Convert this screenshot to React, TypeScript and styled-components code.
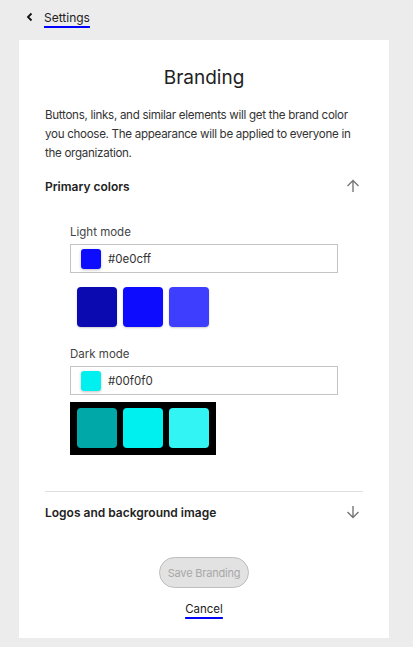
import styled, { createGlobalStyle } from "styled-components";

const GlobalStyle = createGlobalStyle`
  html, body {
    margin: 0;
    padding: 0;
    background: #ececec;
    font-family: Inter, "Noto Sans", sans-serif;
    color: #222;
  }
`;

const Page = styled.div`
  width: 413px;
  min-height: 647px;
  display: flex;
  flex-direction: column;
  padding: 0 24px 11px 19px;
  box-sizing: border-box;
`;

const TopBar = styled.div`
  height: 40px;
  display: flex;
  align-items: center;
  gap: 9px;
  padding-left: 6px;
  margin-top: -3px;
  margin-bottom: 3px;
`;

const BackLink = styled.a`
  font-size: 12px;
  color: #222;
  text-decoration: underline;
  text-decoration-color: #0000ff;
  text-decoration-thickness: 2px;
  text-underline-offset: 4px;
`;

const Card = styled.div`
  background: #fff;
  width: 370px;
  box-sizing: border-box;
  padding: 26px 26px 22px 26px;
  display: flex;
  flex-direction: column;
`;

const Title = styled.h1`
  margin: 0;
  font-size: 19px;
  font-weight: 400;
  text-align: center;
  line-height: 24px;
`;

const Intro = styled.p`
  margin: 16px 0 0 0;
  font-size: 11.6px;
  letter-spacing: -0.3px;
  line-height: 19px;
  color: #333;
`;

const SectionHead = styled.div`
  display: flex;
  justify-content: space-between;
  align-items: center;
  height: 24px;
  font-size: 12px;
  font-weight: 600;
  margin-top: ${(p: { $top: number }) => p.$top}px;
`;

const Arrow = styled.span`
  color: #777;
  display: flex;
  margin-right: 3px;
`;

const Modes = styled.div`
  padding: 26px 0 0 25px;
  display: flex;
  flex-direction: column;
`;

const ModeLabel = styled.div`
  font-size: 11.5px;
  color: #444;
  line-height: 16px;
  margin-top: ${(p: { $top: number }) => p.$top}px;
`;

const HexField = styled.div`
  margin-top: 4px;
  width: 268px;
  height: 29px;
  box-sizing: border-box;
  border: 1px solid #c4c4c4;
  display: flex;
  align-items: center;
  gap: 7px;
  padding-left: 10px;
  font-size: 11.5px;
  color: #333;
`;

const Chip = styled.span<{ $c: string }>`
  width: 20px;
  height: 20px;
  border-radius: 3px;
  background: ${(p) => p.$c};
  box-shadow: 0 1px 3px rgba(0, 0, 0, 0.25);
`;

const SwatchRow = styled.div<{ $dark?: boolean }>`
  display: flex;
  gap: 6px;
  align-self: flex-start;
  background: ${(p) => (p.$dark ? "#000" : "transparent")};
  padding: ${(p) => (p.$dark ? "6px 7px 7px 7px" : "0 7px")};
  margin-top: ${(p) => (p.$dark ? 7 : 14)}px;
`;

const Swatch = styled.div<{ $c: string }>`
  width: 40px;
  height: 40px;
  border-radius: 4px;
  background: ${(p) => p.$c};
  box-shadow: 0 1px 2px rgba(0, 0, 0, 0.2);
`;

const Divider = styled.hr`
  border: none;
  border-top: 1px solid #dedede;
  margin: 36px 0 0 0;
`;

const Actions = styled.div`
  display: flex;
  flex-direction: column;
  align-items: center;
  margin-top: 33px;
  gap: 14px;
`;

const SaveButton = styled.button`
  height: 31px;
  padding: 0 8px;
  border-radius: 16px;
  border: 1px solid #bdbdbd;
  background: #e2e2e2;
  color: #a8a8a8;
  font-family: inherit;
  font-size: 11px;
  letter-spacing: -0.2px;
`;

const CancelLink = styled.a`
  font-size: 11.5px;
  color: #222;
  text-decoration: underline;
  text-decoration-color: #0000ff;
  text-decoration-thickness: 2px;
  text-underline-offset: 4px;
`;

const ArrowIcon = ({ up }: { up: boolean }) => (
  <svg width="14" height="14" viewBox="0 0 14 14" fill="none" stroke="currentColor" strokeWidth="1.4">
    {up ? (
      <path d="M7 13V1.5M1.5 7L7 1.5L12.5 7" />
    ) : (
      <path d="M7 1V12.5M1.5 7L7 12.5L12.5 7" />
    )}
  </svg>
);

const Chevron = () => (
  <svg width="10" height="10" viewBox="0 0 10 10" fill="none" stroke="#111" strokeWidth="1.8">
    <path d="M6.5 1.5L3 5L6.5 8.5" />
  </svg>
);

const light = ["#0a0ab0", "#0e0cff", "#3e3eff"];
const dark = ["#00a8a8", "#00f0f0", "#33f4f4"];

export default function App() {
  return (
    <Page>
      <GlobalStyle />
      <TopBar>
        <Chevron />
        <BackLink>Settings</BackLink>
      </TopBar>
      <Card>
        <Title>Branding</Title>
        <Intro>
          Buttons, links, and similar elements will get the brand color you choose. The appearance will be
          applied to everyone in the organization.
        </Intro>
        <SectionHead $top={11}>
          Primary colors
          <Arrow>
            <ArrowIcon up />
          </Arrow>
        </SectionHead>
        <Modes>
          <ModeLabel $top={0}>Light mode</ModeLabel>
          <HexField>
            <Chip $c="#0e0cff" />
            #0e0cff
          </HexField>
          <SwatchRow>
            {light.map((c) => (
              <Swatch key={c} $c={c} />
            ))}
          </SwatchRow>
          <ModeLabel $top={19}>Dark mode</ModeLabel>
          <HexField>
            <Chip $c="#00f0f0" />
            #00f0f0
          </HexField>
          <SwatchRow $dark>
            {dark.map((c) => (
              <Swatch key={c} $c={c} />
            ))}
          </SwatchRow>
        </Modes>
        <Divider />
        <SectionHead $top={8}>
          Logos and background image
          <Arrow>
            <ArrowIcon up={false} />
          </Arrow>
        </SectionHead>
        <Actions>
          <SaveButton>Save Branding</SaveButton>
          <CancelLink>Cancel</CancelLink>
        </Actions>
      </Card>
    </Page>
  );
}
